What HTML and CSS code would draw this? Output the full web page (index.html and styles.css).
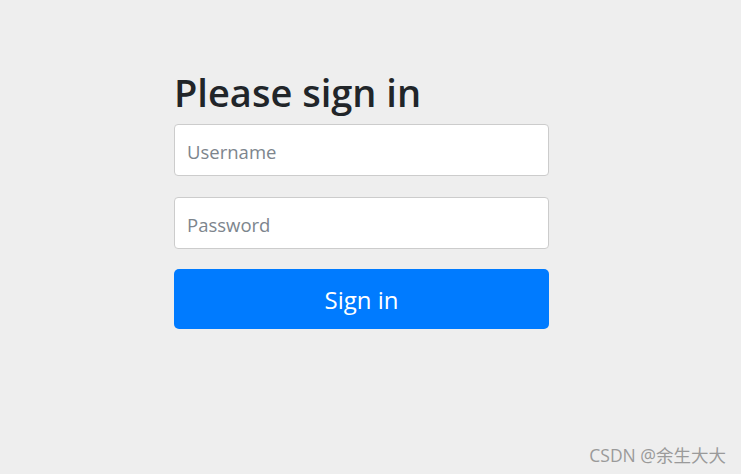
FILE: index.html
```html
<!DOCTYPE html>
<html lang="en">
<head>
    <meta charset="UTF-8">
    <meta name="viewport" content="width=device-width, initial-scale=1.0">
    <title>Please sign in</title>
    <link rel="stylesheet" href="styles.css">
</head>
<body>
    <div class="container">
        <form class="form-signin">
            <h2 class="form-signin-heading">Please sign in</h2>
            <p class="field">
                <input type="text" class="form-control" placeholder="Username">
            </p>
            <p class="field">
                <input type="password" class="form-control" placeholder="Password">
            </p>
            <button class="btn" type="button">Sign in</button>
        </form>
    </div>
    <div class="watermark">CSDN @余生大大</div>
</body>
</html>
```

FILE: styles.css
```css
body {
    margin: 0;
    background-color: #eeeeee;
    font-family: "Open Sans", "Noto Sans", "Noto Sans CJK SC", sans-serif;
    color: #212529;
    height: 474px;
    position: relative;
    overflow: hidden;
}
.container {
    padding: 68px 0 0 174px;
}
.form-signin {
    width: 375px;
}
.form-signin-heading {
    font-size: 38px;
    font-weight: 600;
    line-height: 48px;
    margin: 0 0 8px 0;
}
.field {
    margin: 0 0 21px 0;
}
.field:last-of-type {
    margin-bottom: 20px;
}
.form-control {
    display: block;
    box-sizing: border-box;
    width: 100%;
    height: 52px;
    padding: 2px 12px 0;
    font-family: inherit;
    font-size: 18.5px;
    color: #495057;
    background: white;
    border: 1px solid #cccccc;
    border-radius: 4px;
    outline: none;
}
.form-control::placeholder {
    color: #7d858d;
}
.btn {
    display: block;
    width: 100%;
    height: 60px;
    margin: 0;
    border: none;
    border-radius: 5px;
    background-color: #007bff;
    color: white;
    font-family: inherit;
    font-size: 24px;
}
.watermark {
    position: absolute;
    right: 15px;
    bottom: 7px;
    font-size: 17.5px;
    color: #9a9a9a;
}
```
